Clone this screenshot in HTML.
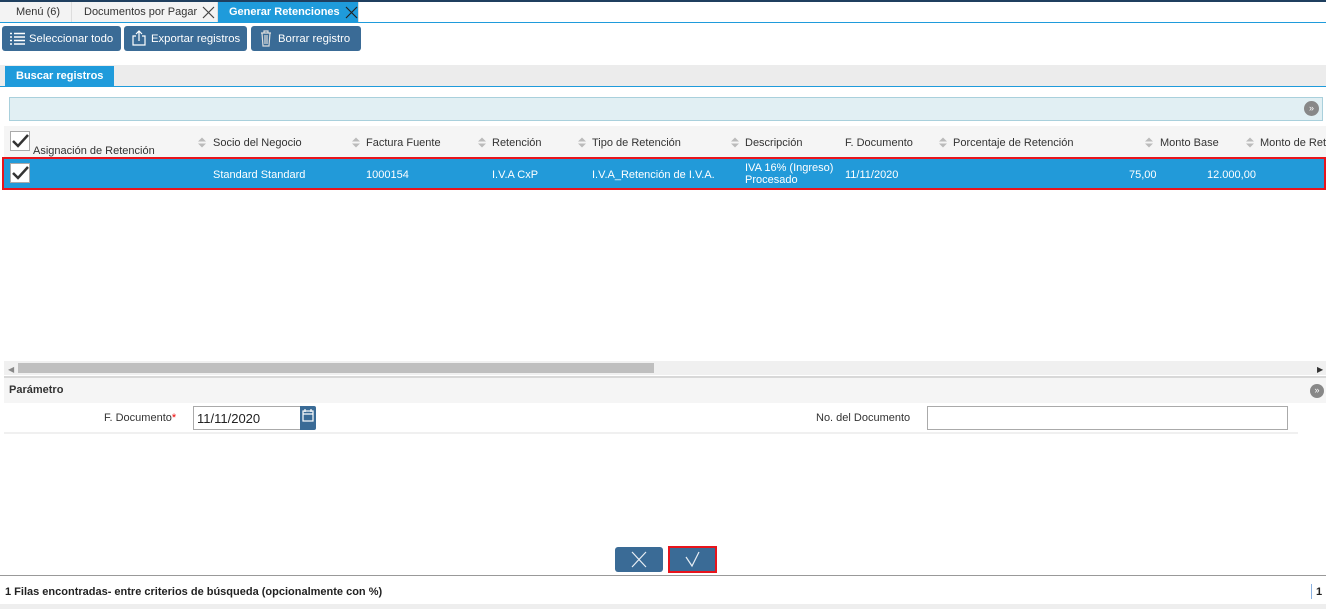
<!DOCTYPE html>
<html><head><meta charset="utf-8"><style>
*{box-sizing:border-box;margin:0;padding:0}
body{width:1326px;height:609px;overflow:hidden;background:#fff;font-family:"Liberation Sans",sans-serif;font-size:11px;color:#333;position:relative}
.a{position:absolute;white-space:nowrap}
.tab{position:absolute;top:2px;height:20px;line-height:21px;font-size:11px;background:#f3f3f3;border-right:1px solid #ddd;padding-left:12px;color:#333;white-space:nowrap}
.btn{position:absolute;top:26px;height:25px;background:#3a6b96;border-radius:3px;color:#fff;font-size:11.3px;line-height:27px;padding-left:27px;white-space:nowrap}
.th{position:absolute;top:137px;font-size:11px;color:#333;white-space:nowrap}
.arr{position:absolute;top:137px;width:8px;height:11px}
.td{position:absolute;top:169px;font-size:11px;color:#fff;white-space:nowrap}
</style></head><body>
<div class="a" style="left:0;top:0;width:1326px;height:2px;background:#1f3f5f"></div>
<div class="tab" style="left:0;width:72px;padding-left:16px">Menú (6)</div>
<div class="tab" style="left:72px;width:146px">Documentos por Pagar</div>
<svg class="a" style="left:202px;top:6px" width="13" height="13"><path d="M1 1L12 12M12 1L1 12" stroke="#444" stroke-width="1.2"/></svg>
<div class="tab" style="left:218px;width:141px;background:#1f9bdb;color:#fff;font-weight:bold;padding-left:11px">Generar Retenciones</div>
<svg class="a" style="left:345px;top:6px" width="13" height="13"><path d="M1 1L12 12M12 1L1 12" stroke="#222" stroke-width="1.2"/></svg>
<div class="a" style="left:0;top:22px;width:1326px;height:1px;background:#1f9bdb"></div>
<div class="btn" style="left:2px;width:119px"><svg class="a" style="left:7px;top:6px" width="16" height="13"><g stroke="#fff" stroke-width="1.5"><path d="M1 1.5h2M1 5h2M1 8.5h2M1 12h2M5 1.5h11M5 5h11M5 8.5h11M5 12h11"/></g></svg>Seleccionar todo</div>
<div class="btn" style="left:124px;width:123px"><svg class="a" style="left:8px;top:4px" width="14" height="16"><g stroke="#fff" stroke-width="1.2" fill="none"><path d="M4 6H1v9h12V6h-3M7 11V1M4 4l3-3 3 3"/></g></svg>Exportar registros</div>
<div class="btn" style="left:251px;width:110px"><svg class="a" style="left:9px;top:4px" width="12" height="17"><g stroke="#ddd" stroke-width="1.2" fill="none"><path d="M1 3h10M4 3V1h4v2M2 3l1 13h6l1-13M5 5v9M7 5v9"/></g></svg>Borrar registro</div>
<div class="a" style="left:0;top:65px;width:1326px;height:22px;background:#ececec"></div>
<div class="a" style="left:5px;top:66px;width:109px;height:21px;background:#1f9bdb;color:#fff;font-weight:bold;font-size:11px;line-height:21px;padding-left:11px">Buscar registros</div>
<div class="a" style="left:0;top:86px;width:1326px;height:1px;background:#1f9bdb"></div>
<div class="a" style="left:9px;top:97px;width:1314px;height:24px;background:#e1eff3;border:1px solid #a9d0dc"></div>
<div class="a" style="left:1304px;top:101px;width:15px;height:15px;border-radius:50%;background:#888;color:#fff;font-size:9px;text-align:center;line-height:14px">»</div>
<div class="a" style="left:4px;top:126px;width:1322px;height:32px;background:#f5f5f5"></div>
<div class="a" style="left:10px;top:131px;width:20px;height:20px;border:1px solid #aaa;background:#fff"><svg width="18" height="18"><path d="M2 9l5 5L17 3" stroke="#333" stroke-width="2.5" fill="none"/></svg></div>
<div class="th" style="left:33px;top:145px">Asignación de Retención</div>
<div class="th" style="left:213px">Socio del Negocio</div>
<div class="th" style="left:366px">Factura Fuente</div>
<div class="th" style="left:492px">Retención</div>
<div class="th" style="left:592px">Tipo de Retención</div>
<div class="th" style="left:745px">Descripción</div>
<div class="th" style="left:845px">F. Documento</div>
<div class="th" style="left:953px">Porcentaje de Retención</div>
<div class="th" style="left:1160px">Monto Base</div>
<div class="th" style="left:1260px">Monto de Ret</div>
<svg width="0" height="0" style="position:absolute"><defs><g id="s"><path d="M0 4.5L4 0.5 8 4.5ZM0 6.5L4 10.5 8 6.5Z" fill="#bbb"/></g></defs></svg>
<svg class="arr" style="left:198px"><use href="#s"/></svg>
<svg class="arr" style="left:352px"><use href="#s"/></svg>
<svg class="arr" style="left:478px"><use href="#s"/></svg>
<svg class="arr" style="left:578px"><use href="#s"/></svg>
<svg class="arr" style="left:731px"><use href="#s"/></svg>
<svg class="arr" style="left:939px"><use href="#s"/></svg>
<svg class="arr" style="left:1145px"><use href="#s"/></svg>
<svg class="arr" style="left:1246px"><use href="#s"/></svg>
<div class="a" style="left:2px;top:157px;width:1324px;height:33px;background:#229ad9;border:2px solid #e8141c"></div>
<div class="a" style="left:10px;top:163px;width:20px;height:20px;border:1px solid #aaa;background:#fff"><svg width="18" height="18"><path d="M2 9l5 5L17 3" stroke="#333" stroke-width="2.5" fill="none"/></svg></div>
<div class="td" style="left:213px">Standard Standard</div>
<div class="td" style="left:366px">1000154</div>
<div class="td" style="left:492px">I.V.A CxP</div>
<div class="td" style="left:592px">I.V.A_Retención de I.V.A.</div>
<div class="td" style="left:745px;top:162px;line-height:12px">IVA 16% (Ingreso)<br>Procesado</div>
<div class="td" style="left:845px">11/11/2020</div>
<div class="td" style="left:1129px">75,00</div>
<div class="td" style="left:1207px">12.000,00</div>
<div class="a" style="left:4px;top:361px;width:1322px;height:14px;background:#f0f0f0"></div>
<div class="a" style="left:18px;top:363px;width:636px;height:10px;background:#bfbfbf"></div>
<div class="a" style="left:8px;top:365px;font-size:8px;color:#888">◀</div>
<div class="a" style="left:1317px;top:365px;font-size:8px;color:#333">▶</div>
<div class="a" style="left:4px;top:376px;width:1322px;height:2px;background:#d8d8d8"></div>
<div class="a" style="left:4px;top:378px;width:1322px;height:25px;background:#f5f5f5;font-weight:bold;font-size:11px;line-height:25px;padding-left:5px">Parámetro</div>
<div class="a" style="left:1310px;top:384px;width:14px;height:14px;border-radius:50%;background:#888;color:#fff;font-size:9px;text-align:center;line-height:13px">»</div>
<div class="a" style="left:4px;top:432px;width:1294px;height:2px;background:#f0f0f0"></div>
<div class="a" style="left:104px;top:412px;font-size:11px">F. Documento<span style="color:#e00">*</span></div>
<div class="a" style="left:193px;top:406px;width:109px;height:24px;border:1px solid #aaa;font-size:13px;line-height:23px;padding-left:3px;color:#222">11/11/2020</div>
<div class="a" style="left:300px;top:406px;width:16px;height:24px;background:#3a6b96;border-radius:0 2px 2px 0"><svg width="16" height="24"><g stroke="#fff" fill="none" stroke-width="1.2"><rect x="3" y="5" width="10" height="10"/><path d="M3 8h10M5 3v3M11 3v3"/></g></svg></div>
<div class="a" style="left:816px;top:412px;font-size:11px">No. del Documento</div>
<div class="a" style="left:927px;top:406px;width:361px;height:24px;border:1px solid #aaa"></div>
<div class="a" style="left:615px;top:547px;width:48px;height:25px;background:#3a6b96;border-radius:3px"><svg width="48" height="25"><path d="M17 5l14 15M31 5L17 20" stroke="#e8eef4" stroke-width="1.2"/></svg></div>
<div class="a" style="left:668px;top:546px;width:49px;height:27px;background:#3a6b96;border:2px solid #e8141c"><svg width="45" height="23"><path d="M16 9l6 9 7-14" stroke="#e8eef4" stroke-width="1.2" fill="none"/></svg></div>
<div class="a" style="left:0;top:575px;width:1326px;height:1px;background:#999"></div>
<div class="a" style="left:5px;top:586px;font-weight:bold;font-size:11px;color:#222">1 Filas encontradas- entre criterios de búsqueda (opcionalmente con %)</div>
<div class="a" style="left:1311px;top:584px;width:1px;height:15px;background:#8ab0e0"></div>
<div class="a" style="left:1316px;top:586px;font-weight:bold;font-size:11px;color:#222">1</div>
<div class="a" style="left:0;top:604px;width:1326px;height:5px;background:#eee"></div>
</body></html>
